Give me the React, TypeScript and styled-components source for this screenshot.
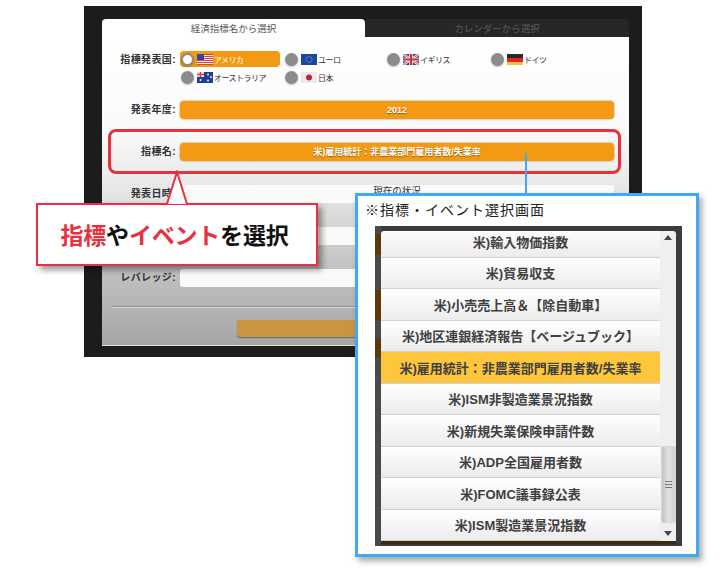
import React from "react";
import { createGlobalStyle, styled } from "styled-components";

const JP = `"Liberation Sans", "Noto Sans CJK JP", sans-serif`;

const GlobalStyle = createGlobalStyle`
  html, body {
    margin: 0;
    padding: 0;
    background: #fff;
    font-family: ${JP};
  }
`;

const FlagUS = () => (
  <svg width="16" height="11" viewBox="0 0 16 11">
    <rect width="16" height="11" fill="#f4f0f0" />
    {[0, 2, 4, 6, 8, 10].map((y) => (
      <rect key={y} y={y} width="16" height="1" fill="#d8404a" />
    ))}
    <rect width="7" height="6" fill="#2f4a9a" />
  </svg>
);

const FlagEU = () => (
  <svg width="16" height="11" viewBox="0 0 16 11">
    <rect width="16" height="11" fill="#17479e" />
    <circle cx="8" cy="5.5" r="3" fill="none" stroke="#5f78a8" strokeWidth="1" />
  </svg>
);

const FlagUK = () => (
  <svg width="16" height="11" viewBox="0 0 16 11">
    <rect width="16" height="11" fill="#2b4a9c" />
    <path d="M0 0L16 11M16 0L0 11" stroke="#f0e8e8" strokeWidth="2.4" />
    <path d="M0 0L16 11M16 0L0 11" stroke="#d0404a" strokeWidth="0.8" />
    <path d="M8 0V11M0 5.5H16" stroke="#f0e8e8" strokeWidth="3.6" />
    <path d="M8 0V11M0 5.5H16" stroke="#d0303c" strokeWidth="2" />
  </svg>
);

const FlagDE = () => (
  <svg width="16" height="11" viewBox="0 0 16 11">
    <rect width="16" height="4" fill="#2a2a2a" />
    <rect y="4" width="16" height="4" fill="#d8282c" />
    <rect y="8" width="16" height="3" fill="#f2c230" />
  </svg>
);

const FlagAU = () => (
  <svg width="16" height="11" viewBox="0 0 16 11">
    <rect width="16" height="11" fill="#1f3f94" />
    <rect width="7" height="5" fill="#e8e4ea" />
    <path d="M3.5 0V5M0 2.5H7" stroke="#d0404a" strokeWidth="1.4" />
    <circle cx="3.5" cy="8" r="1" fill="#fff" />
    <circle cx="11" cy="2.5" r="0.9" fill="#fff" />
    <circle cx="14" cy="5" r="0.9" fill="#fff" />
    <circle cx="11" cy="8.5" r="0.9" fill="#fff" />
  </svg>
);

const FlagJP = () => (
  <svg width="16" height="11" viewBox="0 0 16 11">
    <rect width="16" height="11" fill="#ecebeb" />
    <circle cx="8" cy="5.5" r="3" fill="#c4243c" />
  </svg>
);

const countries = [
  { name: "アメリカ", flag: <FlagUS />, active: true },
  { name: "ユーロ", flag: <FlagEU /> },
  { name: "イギリス", flag: <FlagUK /> },
  { name: "ドイツ", flag: <FlagDE /> },
  { name: "オーストラリア", flag: <FlagAU /> },
  { name: "日本", flag: <FlagJP /> },
];

const items = [
  "米)輸入物価指数",
  "米)貿易収支",
  "米)小売売上高＆【除自動車】",
  "米)地区連銀経済報告【ベージュブック】",
  "米)雇用統計：非農業部門雇用者数/失業率",
  "米)ISM非製造業景況指数",
  "米)新規失業保険申請件数",
  "米)ADP全国雇用者数",
  "米)FOMC議事録公表",
  "米)ISM製造業景況指数",
];

export default function App() {
  return (
    <Page>
      <GlobalStyle />
      <Panel>
        <Tabs>
          <Tab $active>経済指標名から選択</Tab>
          <Tab>カレンダーから選択</Tab>
        </Tabs>
        <Body>
          <Row>
            <Label>指標発表国:</Label>
            <RadioGrid>
              {countries.map((c) => (
                <RadioItem key={c.name} $active={c.active}>
                  <Radio $active={c.active} />
                  {c.flag}
                  <RadioText $active={c.active}>{c.name}</RadioText>
                </RadioItem>
              ))}
            </RadioGrid>
          </Row>
          <Row>
            <Label>発表年度:</Label>
            <Select>2012</Select>
          </Row>
          <Row>
            <Label>指標名:</Label>
            <Select>米)雇用統計：非農業部門雇用者数/失業率</Select>
          </Row>
          <Row>
            <Label>発表日時:</Label>
            <Field>現在の状況</Field>
          </Row>
          <Row>
            <Label />
            <Field />
          </Row>
          <Row>
            <Label>レバレッジ:</Label>
            <Field />
          </Row>
          <Divider />
          <SubmitButton />
          <Highlight />
        </Body>
      </Panel>

      <Connector />

      <Callout>
        <CalloutArrow width="24" height="36" viewBox="0 0 24 36">
          <path d="M2 34L12 2L22 34Z" fill="#fff" />
          <path d="M2 34L12 2L22 34" fill="none" stroke="#e8303e" strokeWidth="2" />
        </CalloutArrow>
        <Accent>指標</Accent>や<Accent>イベント</Accent>を選択
      </Callout>

      <Popup>
        <PopupTitle>※指標・イベント選択画面</PopupTitle>
        <Frame>
          <List>
            <Rows>
              {items.map((item, i) => (
                <ListRow key={item} $active={i === 4}>
                  {item}
                </ListRow>
              ))}
            </Rows>
            <Scrollbar>
              <ScrollArrow width="8" height="5" viewBox="0 0 8 5">
                <path d="M4 0L8 5H0Z" fill="#444" />
              </ScrollArrow>
              <Thumb>
                <Grip />
              </Thumb>
              <ScrollArrow width="8" height="5" viewBox="0 0 8 5">
                <path d="M0 0H8L4 5Z" fill="#444" />
              </ScrollArrow>
            </Scrollbar>
          </List>
        </Frame>
      </Popup>
    </Page>
  );
}

const Page = styled.div`
  position: relative;
  width: 725px;
  height: 578px;
  overflow: hidden;
  padding-top: 6px;
  box-sizing: border-box;
`;

const Panel = styled.div`
  width: 558px;
  height: 351px;
  margin-left: 84px;
  padding: 13px 13px 11px 18px;
  box-sizing: border-box;
  background: #1c1c1c;
  display: flex;
  flex-direction: column;
`;

const Tabs = styled.div`
  display: flex;
  height: 18px;
  flex: none;
`;

const Tab = styled.div<{ $active?: boolean }>`
  flex: ${(p) => (p.$active ? "0 0 263px" : "1")};
  display: flex;
  align-items: center;
  justify-content: center;
  font-size: 9.5px;
  color: ${(p) => (p.$active ? "#555" : "#5a5a5a")};
  background: ${(p) => (p.$active ? "#fff" : "#272727")};
  border-radius: 4px 4px 0 0;
`;

const Body = styled.div`
  position: relative;
  flex: 1;
  display: flex;
  flex-direction: column;
  gap: 24px;
  padding-top: 14px;
  background: linear-gradient(#fff 0%, #fafafa 30%, #e6e6e6 50%, #c2c2c2 75%, #a6a6a6 100%);
  border-bottom: 1px solid #ddd;
  box-sizing: border-box;
`;

const Row = styled.div`
  display: flex;
  align-items: flex-start;
  gap: 4px;
  &:first-child {
    margin-bottom: -8px;
  }
`;

const Label = styled.div`
  flex: 0 0 74px;
  height: 18px;
  line-height: 18px;
  text-align: right;
  font-size: 10px;
  font-weight: bold;
  letter-spacing: 0.4px;
  color: #333;
  white-space: nowrap;
`;

const RadioGrid = styled.div`
  display: grid;
  grid-template-columns: 104px 102px 104px 100px;
  grid-auto-rows: 16px;
  row-gap: 2px;
`;

const RadioItem = styled.div<{ $active?: boolean }>`
  width: 100px;
  height: 16px;
  display: flex;
  align-items: center;
  gap: 3px;
  padding-left: 1px;
  box-sizing: border-box;
  border-radius: 4px;
  background: ${(p) => (p.$active ? "#f39a12" : "transparent")};
`;

const Radio = styled.span<{ $active?: boolean }>`
  flex: none;
  width: 13px;
  height: 13px;
  box-sizing: border-box;
  border-radius: 50%;
  background: ${(p) => (p.$active ? "#fff" : "#8b8b8b")};
  border: ${(p) => (p.$active ? "2px solid #8b8b8b" : "none")};
  box-shadow: 0 1px 2px rgba(0, 0, 0, 0.25);
`;

const RadioText = styled.span<{ $active?: boolean }>`
  margin-left: -2px;
  font-size: 8px;
  letter-spacing: -0.5px;
  white-space: nowrap;
  color: ${(p) => (p.$active ? "#fff" : "#333")};
`;

const Select = styled.div`
  width: 434px;
  height: 18px;
  line-height: 18px;
  text-align: center;
  font-size: 9px;
  font-weight: bold;
  color: #fff;
  background: #f39a12;
  border-radius: 4px;
  box-shadow: 0 0 1px 1px rgba(190, 170, 140, 0.5);
  text-shadow: 0 1px 1px rgba(0, 0, 0, 0.4);
`;

const Field = styled.div`
  width: 434px;
  height: 18px;
  line-height: 12px;
  text-align: center;
  font-size: 9.5px;
  color: #333;
  background: #fafafa;
  border-radius: 3px;
`;

const Divider = styled.div`
  height: 1px;
  margin: -5px 10px 0;
  background: #8e8e8e;
  border-bottom: 1px solid #ddd;
  flex: none;
`;

const SubmitButton = styled.div`
  flex: none;
  width: 258px;
  height: 17px;
  margin: -12px auto 0;
  background: #c9963f;
  border-radius: 3px;
  box-shadow: 0 1px 1px rgba(0, 0, 0, 0.4);
`;

const Highlight = styled.div`
  position: absolute;
  left: 6px;
  top: 92px;
  width: 513px;
  height: 45px;
  box-sizing: border-box;
  border: 3px solid #e8303e;
  border-radius: 8px;
`;

const Connector = styled.div`
  position: absolute;
  left: 525px;
  top: 153px;
  width: 2px;
  height: 42px;
  background: #3fa9f5;
`;

const Callout = styled.div`
  position: absolute;
  left: 36px;
  top: 203px;
  width: 282px;
  height: 63px;
  box-sizing: border-box;
  display: flex;
  align-items: center;
  justify-content: center;
  padding: 0 5px 2px 0;
  font-size: 23px;
  font-weight: bold;
  letter-spacing: -0.2px;
  font-family: "Noto Sans CJK JP", sans-serif;
  color: #111;
  background: #fff;
  border: 2px solid #e8303e;
  box-shadow: 4px 4px 6px rgba(0, 0, 0, 0.4);
`;

const CalloutArrow = styled.svg`
  position: absolute;
  left: 127px;
  top: -35px;
`;

const Accent = styled.span`
  color: #e8303e;
`;

const Popup = styled.div`
  position: absolute;
  left: 355px;
  top: 193px;
  width: 344px;
  height: 364px;
  box-sizing: border-box;
  padding: 4px 17px 0;
  background: #fff;
  border: 3px solid #3fa9f5;
  box-shadow: 3px 4px 6px rgba(0, 0, 0, 0.35);
`;

const PopupTitle = styled.div`
  height: 26px;
  line-height: 20px;
  font-size: 14px;
  letter-spacing: 1px;
  color: #222;
  white-space: nowrap;
  margin-left: -10px;
`;

const Frame = styled.div`
  width: 307px;
  height: 320px;
  box-sizing: border-box;
  padding: 5px 6px 5px 6px;
  background:
    linear-gradient(
        #4a4a4a 0 8px,
        #5b3a08 8px 29px,
        #4a4a4a 29px 64px,
        #5b3a08 64px 94px,
        #4a4a4a 94px 113px,
        #5b3a08 113px 131px,
        #4a4a4a 131px
      )
      left top / 6px 100% no-repeat,
    #3c3c3c;
`;

const List = styled.div`
  display: flex;
  height: 310px;
  border-radius: 3px 3px 0 0;
  overflow: hidden;
  box-shadow: 0 3px 0 #3a2a10;
`;

const Rows = styled.div`
  width: 279px;
  flex: none;
  display: flex;
  flex-direction: column;
  margin-top: -5px;
`;

const ListRow = styled.div<{ $active?: boolean }>`
  height: 31.5px;
  flex: none;
  box-sizing: border-box;
  display: flex;
  align-items: center;
  justify-content: center;
  font-size: 13px;
  font-weight: bold;
  color: #404040;
  white-space: nowrap;
  border-bottom: 1px solid #d2d2d2;
  background: ${(p) =>
    p.$active ? "#fdc63c" : "linear-gradient(#fff, #ececec)"};
`;

const Scrollbar = styled.div`
  flex: 1;
  display: flex;
  flex-direction: column;
  align-items: center;
  background: #efefef;
  padding-top: 4px;
  padding-bottom: 5px;
  box-sizing: border-box;
`;

const ScrollArrow = styled.svg`
  flex: none;
`;

const Thumb = styled.div`
  width: 15px;
  height: 77px;
  margin-top: auto;
  margin-bottom: 8px;
  box-sizing: border-box;
  display: flex;
  align-items: center;
  justify-content: center;
  background: linear-gradient(90deg, #c4c4c4, #e2e2e2 50%, #cfcfcf);
  border: 1px solid #d8d8d8;
  border-radius: 2px;
`;

const Grip = styled.div`
  width: 7px;
  height: 7px;
  background: repeating-linear-gradient(#777 0 1px, transparent 1px 3px);
`;
